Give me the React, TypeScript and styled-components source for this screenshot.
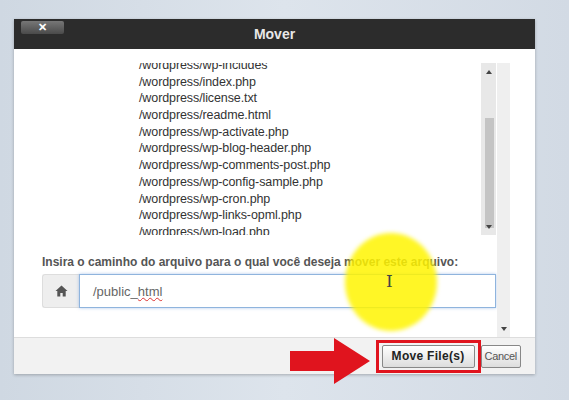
import React from "react";
import styled, { createGlobalStyle } from "styled-components";

const G = createGlobalStyle`
  html,body{margin:0;padding:0;background:#d5dde6;font-family:"Liberation Sans",Arial,sans-serif;}
`;
const Page = styled.div`
  width:569px;height:400px;position:relative;overflow:hidden;
  background:linear-gradient(90deg,#cfd8e2,#dde4ec 50%,#d2dae4);
  padding:19px 0 0 14px;box-sizing:border-box;
`;
const Dialog = styled.div`
  width:521px;background:#fff;box-shadow:0 1px 3px rgba(0,0,0,.25);
  display:flex;flex-direction:column;
`;
const Header = styled.div`
  height:30px;background:#2c2c2c;display:flex;align-items:center;position:relative;
  justify-content:center;color:#e8e8e8;font-weight:bold;font-size:14px;
`;
const Close = styled.div`
  position:absolute;left:7px;top:2px;width:43px;height:13px;border-radius:2px;
  background:linear-gradient(#777,#4a4a4a);color:#fff;font-size:11px;font-weight:bold;
  display:flex;align-items:center;justify-content:center;line-height:1;
`;
const Body = styled.div`
  height:288px;display:flex;padding:14px 25px 0 28px;box-sizing:border-box;
`;
const Main = styled.div`flex:1;display:flex;flex-direction:column;`;
const ListRow = styled.div`display:flex;`;
const List = styled.div`flex:1;height:172px;overflow:hidden;padding-left:97px;`;
const Items = styled.div`margin-top:-6px;`;
const Item = styled.div`font-size:12.5px;color:#333;height:16.7px;line-height:16.7px;letter-spacing:-0.1px;`;
const Scroll = styled.div`
  width:15px;height:172px;background:#e8e8e8;display:flex;flex-direction:column;align-items:center;
  position:relative;
`;
const Thumb = styled.div`
  position:absolute;left:4px;top:55px;width:9px;height:110px;background:#c4c4c4;
`;
const Arrow = styled.div<{ down?: boolean }>`
  width:0;height:0;border-left:3px solid transparent;border-right:3px solid transparent;
  ${p => p.down ? "border-top:4px solid #444;position:absolute;bottom:6px;" : "border-bottom:4px solid #444;margin-top:7px;"}
`;
const Label = styled.div`margin:20px 0 0 0;font-size:12px;font-weight:bold;color:#555;white-space:nowrap;`;
const InputRow = styled.div`display:flex;margin-top:5px;height:34px;`;
const Addon = styled.div`
  width:36px;background:#eee;border:1px solid #ddd;border-right:none;border-radius:3px 0 0 3px;
  display:flex;align-items:center;justify-content:center;color:#555;
`;
const Input = styled.div`
  flex:1;border:1px solid #8fb4dd;box-shadow:0 0 3px rgba(100,150,220,.5);
  display:flex;align-items:center;padding-left:13px;font-size:13px;color:#666;
`;
const Squig = styled.span`text-decoration:underline wavy #d33;text-decoration-thickness:1px;`;
const Side = styled.div`
  width:13px;margin-left:1px;background:#efefef;position:relative;display:flex;justify-content:center;
`;
const Footer = styled.div`
  height:36px;background:#f2f2f2;border-top:1px solid #ddd;display:flex;align-items:center;
  justify-content:flex-end;padding-right:14px;gap:0;
`;
const Hi = styled.div`border:3px solid #e0141e;padding:2px 3px;display:flex;`;
const Btn = styled.button<{ primary?: boolean }>`
  font-family:"Liberation Sans",Arial,sans-serif;font-size:${p => p.primary ? "12px" : "11px"};height:23px;
  padding:0 ${p => p.primary ? "9px" : "3px"};
  border:1px solid #888;border-radius:2px;background:linear-gradient(#fff,#ddd);
  color:${p => p.primary ? "#222" : "#555"};font-weight:${p => p.primary ? "bold" : "normal"};
  letter-spacing:${p => p.primary ? "0.3px" : "-0.3px"};
`;
const Cursor = styled.div`
  position:absolute;left:345px;top:233px;width:92px;height:98px;border-radius:50%;
  background:rgba(255,245,0,.85);filter:blur(2px);
`;
const IBeam = styled.div`
  position:absolute;left:386px;top:271px;color:#444;font-size:17px;font-family:"DejaVu Serif",serif;
`;
const RedArrow = styled.svg`position:absolute;left:290px;top:338px;`;

const files = ["wp-includes","index.php","license.txt","readme.html","wp-activate.php","wp-blog-header.php","wp-comments-post.php","wp-config-sample.php","wp-cron.php","wp-links-opml.php","wp-load.php","wp-login.php","wp-mail.php"];

export default function App() {
  return (
    <Page>
      <G />
      <Dialog>
        <Header><Close>✕</Close>Mover</Header>
        <Body>
          <Main>
            <ListRow>
              <List><Items>{files.map(f => <Item key={f}>/wordpress/{f}</Item>)}</Items></List>
              <Scroll><Arrow /><Thumb /><Arrow down /></Scroll>
            </ListRow>
            <Label>Insira o caminho do arquivo para o qual você deseja mover este arquivo:</Label>
            <InputRow>
              <Addon>
                <svg width="13" height="12" viewBox="0 0 13 12"><path d="M6.5 0.5L0.5 6h1.8v5.5h3V8h2.4v3.5h3V6h1.8z" fill="#555"/></svg>
              </Addon>
              <Input>/public_<Squig>html</Squig></Input>
            </InputRow>
          </Main>
          <Side><Arrow down /></Side>
        </Body>
        <Footer>
          <Hi><Btn primary>Move File(s)</Btn></Hi>
          <Btn>Cancel</Btn>
        </Footer>
      </Dialog>
      <Cursor />
      <IBeam>I</IBeam>
      <RedArrow width="82" height="46" viewBox="0 0 82 46">
        <path d="M0 13h44V0l36 23-36 23V33H0z" fill="#e0141e"/>
      </RedArrow>
    </Page>
  );
}
